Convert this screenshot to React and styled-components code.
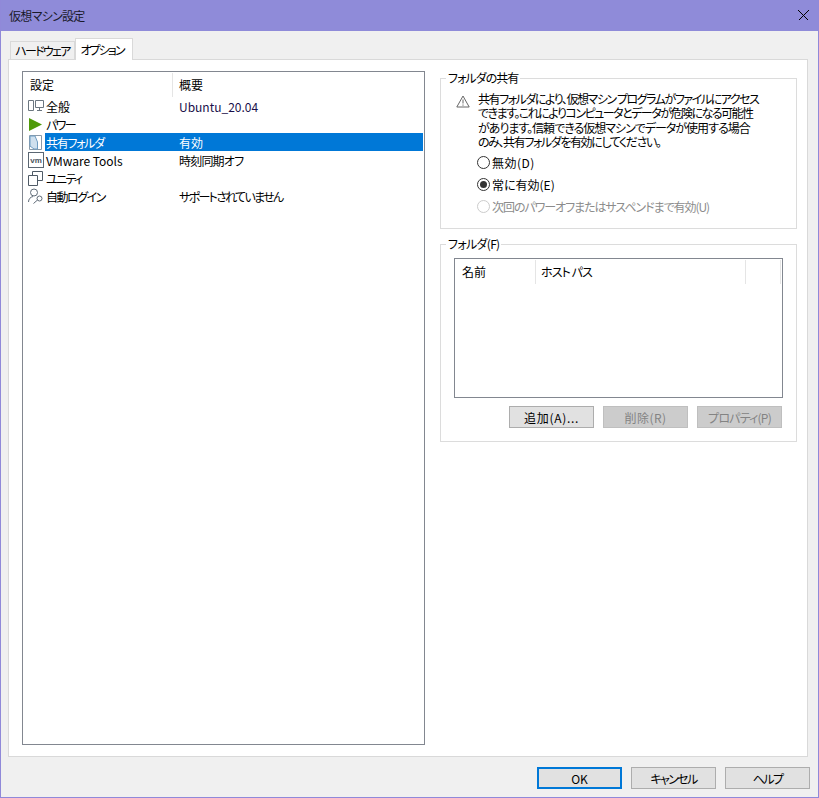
import React from 'react';
import styled, { createGlobalStyle } from 'styled-components';

const GlobalStyle = createGlobalStyle`
  html, body { margin: 0; padding: 0; background: #f0f0f0; }
  * { box-sizing: border-box; }
  body {
    font-family: "Noto Sans CJK JP", "Open Sans", sans-serif;
    font-size: 12px;
    font-feature-settings: "palt";
    color: #000;
  }
`;

const Win = styled.div`
  width: 819px;
  height: 798px;
  display: flex;
  flex-direction: column;
  border: 1px solid #9089d9;
  border-top: 0;
  background: #f0f0f0;
  overflow: hidden;
`;

const TitleBar = styled.div`
  height: 31px;
  flex: none;
  margin: 0 -1px;
  padding: 0 10px 0 9px;
  background: #8f8bd9;
  display: flex;
  align-items: center;
  justify-content: space-between;
  font-size: 12px;
  color: #1a1a2a;
`;

/* Meiryo UI kana are much narrower than Noto's, so each label gets its own tracking */
const Label = styled.span`
  letter-spacing: ${(p) => p.$track || 0}px;
  white-space: nowrap;
`;

const TabStrip = styled.div`
  height: 28px;
  flex: none;
  padding: 8px 0 0 9px;
  display: flex;
  align-items: flex-end;
`;

const Tab = styled.div`
  display: flex;
  align-items: center;
  justify-content: center;
  background: ${(p) => (p.$active ? '#fff' : '#f0f0f0')};
  border: 1px solid #d9d9d9;
  border-bottom: 0;
  width: ${(p) => (p.$active ? '58px' : '65px')};
  height: ${(p) => (p.$active ? '22px' : '18px')};
  margin-bottom: ${(p) => (p.$active ? '-1px' : '0')};
  padding-right: ${(p) => (p.$active ? '4px' : '0')};
  position: relative;
  z-index: ${(p) => (p.$active ? 1 : 0)};
`;

const Pane = styled.div`
  margin: 0 10px 0 7px;
  height: 698px;
  flex: none;
  background: #fff;
  border: 1px solid #d9d9d9;
  padding: 11px 10px 11px 13px;
  display: flex;
  gap: 15px;
`;

const ListBox = styled.div`
  width: 403px;
  flex: none;
  border: 1px solid #828790;
  background: #fff;
  padding: 1px 1px 0 1px;
`;

const ListHead = styled.div`
  display: grid;
  grid-template-columns: 149px 1fr;
  height: 24px;
  align-items: stretch;
`;

const HeadCell = styled.div`
  display: flex;
  align-items: center;
  padding: 0 0 2px 6px;
  border-right: ${(p) => (p.$divider ? '1px solid #e5e5e5' : '0')};
  height: 24px;
`;

const Row = styled.div`
  display: flex;
  height: 18px;
  align-items: center;
`;

const IconSlot = styled.div`
  width: 21px;
  height: 18px;
  padding-left: 4px;
  flex: none;
  display: flex;
  align-items: center;
`;

const RowBody = styled.div`
  flex: 1;
  height: 18px;
  display: grid;
  grid-template-columns: 133px 1fr;
  align-items: center;
  padding-left: 1px;
  background: ${(p) => (p.$selected ? '#0078d7' : 'transparent')};
  color: ${(p) => (p.$selected ? '#fff' : '#000')};
`;

const Value = styled(Label)`
  color: ${(p) => p.$color || 'inherit'};
`;

const Side = styled.div`
  width: 357px;
  flex: none;
  display: flex;
  flex-direction: column;
  gap: 8px;
`;

const Group = styled.fieldset`
  margin: 0;
  min-width: 0;
  height: ${(p) => p.$height}px;
  border: 1px solid #dcdcdc;
  padding: ${(p) => p.$padding};
`;

const Legend = styled.legend`
  margin-left: 5px;
  padding: 0 2px;
  font-size: 12px;
  line-height: 14px;
`;

const Notice = styled.div`
  display: flex;
  gap: 8px;
  padding-left: 15px;
`;

const NoticeText = styled.div`
  width: 300px;
  line-height: 14.4px;
  font-size: 12px;
`;

const NoticeLine = styled(Label)`
  display: block;
`;

const RadioList = styled.div`
  display: flex;
  flex-direction: column;
  gap: 6px;
  margin: 5px 0 0 36px;
`;

const RadioRow = styled.div`
  height: 16px;
  display: flex;
  align-items: center;
  gap: 2px;
  color: ${(p) => (p.$disabled ? '#8c8c8c' : '#000')};
`;

const Circle = styled.span`
  width: 13px;
  height: 13px;
  flex: none;
  border-radius: 50%;
  border: 1px solid ${(p) => (p.$disabled ? '#cccccc' : '#333')};
  display: flex;
  align-items: center;
  justify-content: center;
  &::after {
    content: '';
    display: ${(p) => (p.$checked ? 'block' : 'none')};
    width: 7px;
    height: 7px;
    border-radius: 50%;
    background: #333;
  }
`;

const FolderArea = styled.div`
  padding: 7px 13px 0;
`;

const FolderTable = styled.div`
  height: 140px;
  border: 1px solid #828790;
  background: #fff;
  padding: 1px 1px 0;
`;

const FolderHead = styled.div`
  display: grid;
  grid-template-columns: 80px 210px 35px;
  height: 24px;
`;

const FolderCell = styled.div`
  display: flex;
  align-items: center;
  padding: 0 0 2px ${(p) => p.$pad}px;
  border-right: 1px solid #e5e5e5;
`;

const ButtonRow = styled.div`
  display: flex;
  justify-content: flex-end;
  gap: 9px;
  margin: 8px 1px 0 0;
`;

const Button = styled.div`
  width: 85px;
  height: 22px;
  flex: none;
  display: flex;
  align-items: center;
  justify-content: center;
  background: ${(p) => (p.$disabled ? '#cccccc' : '#e1e1e1')};
  border: ${(p) => (p.$primary ? '2px solid #0078d7' : `1px solid ${p.$disabled ? '#bfbfbf' : '#adadad'}`)};
  color: ${(p) => (p.$disabled ? '#838383' : '#000')};
  font-size: 12px;
`;

const Footer = styled.div`
  flex: 1;
  display: flex;
  justify-content: flex-end;
  gap: 9px;
  padding: 10px 8px 0 0;
`;

const CloseIcon = () => (
  <svg width="11" height="11" viewBox="0 0 11 11" shapeRendering="crispEdges">
    <path d="M0.5 0.5 10.5 10.5M10.5 0.5 0.5 10.5" stroke="#000" strokeWidth="1" fill="none" />
  </svg>
);

const GeneralIcon = () => (
  <svg width="16" height="14" viewBox="0 0 16 14">
    <path d="M.5 1.5h5v10h-5zM7.5 1.5h8v7h-8zM11.5 8.5v3M9 11.5h5" fill="none" stroke="#6b7680" />
  </svg>
);

const PowerIcon = () => (
  <svg width="15" height="15" viewBox="0 0 15 15">
    <path d="M1 1 14 7.5 1 14z" fill="#4f9a0a" />
  </svg>
);

const SharedIcon = () => (
  <svg width="16" height="17" viewBox="0 0 16 17">
    <path d="M1.5 1.5h12v14h-12z" fill="#fff" stroke="#8a9aa8" />
    <path d="M2 2h5l2.5 6v7H6L2 12z" fill="#cfe0ee" stroke="#6f9dc2" />
  </svg>
);

const VmIcon = () => (
  <svg width="16" height="16" viewBox="0 0 16 16">
    <rect x=".5" y=".5" width="15" height="15" fill="#fff" stroke="#5a6672" />
    <text x="8" y="10.5" textAnchor="middle" fontSize="8" fontWeight="700" fontFamily="Liberation Sans" fill="#4a5560">vm</text>
  </svg>
);

const UnityIcon = () => (
  <svg width="15" height="16" viewBox="0 0 15 16">
    <path d="M.5 5.5h9v10h-9zM4.5 5.5v-4h10v9h-5" fill="none" stroke="#4f5a66" />
  </svg>
);

const LoginIcon = () => (
  <svg width="16" height="16" viewBox="0 0 16 16">
    <circle cx="6" cy="4.5" r="3.5" fill="none" stroke="#5f6b77" />
    <path d="M.5 14c0-3 2-5 4.5-5.5" fill="none" stroke="#5f6b77" />
    <circle cx="11.5" cy="10.5" r="2.5" fill="none" stroke="#5f6b77" />
    <path d="M9.5 12 5.5 15.5" fill="none" stroke="#5f6b77" />
  </svg>
);

const WarningIcon = () => (
  <svg width="14" height="13" viewBox="0 0 14 13" style={{ flex: 'none', marginTop: 3 }}>
    <path d="M7 1 13.2 12H.8z" fill="#fff" stroke="#666" />
    <path d="M7 4.5v4M7 9.5v1.2" stroke="#666" />
  </svg>
);

const settings = [
  { name: '全般', value: 'Ubuntu_20.04', icon: <GeneralIcon />, color: '#1a0f4a' },
  { name: 'パワー', track: -1.6, value: '', icon: <PowerIcon /> },
  { name: '共有フォルダ', track: -1.3, value: '有効', icon: <SharedIcon />, selected: true },
  { name: 'VMware Tools', value: '時刻同期オフ', valueTrack: -0.8, icon: <VmIcon /> },
  { name: 'ユニティ', track: -1.7, value: '', icon: <UnityIcon /> },
  { name: '自動ログイン', track: -1.5, value: 'サポートされていません', valueTrack: -1.7, icon: <LoginIcon /> },
];

const noticeLines = [
  { text: '共有フォルダにより、仮想マシン プログラムがファイルにアクセス', track: -1.45 },
  { text: 'できます。これによりコンピュータとデータが危険になる可能性', track: -1.5 },
  { text: 'があります。信頼できる仮想マシンでデータが使用する場合', track: -1 },
  { text: 'のみ、共有フォルダを有効にしてください。', track: -1.4 },
];

export default function App() {
  return (
    <>
      <GlobalStyle />
      <Win>
        <TitleBar>
          <Label $track={-0.7}>仮想マシン設定</Label>
          <CloseIcon />
        </TitleBar>
        <TabStrip>
          <Tab><Label $track={-1.7}>ハードウェア</Label></Tab>
          <Tab $active><Label $track={-1.9}>オプション</Label></Tab>
        </TabStrip>
        <Pane>
          <ListBox>
            <ListHead>
              <HeadCell $divider>設定</HeadCell>
              <HeadCell>概要</HeadCell>
            </ListHead>
            {settings.map((s) => (
              <Row key={s.name}>
                <IconSlot>{s.icon}</IconSlot>
                <RowBody $selected={s.selected}>
                  <Label $track={s.track}>{s.name}</Label>
                  <Value $color={s.color} $track={s.valueTrack}>{s.value}</Value>
                </RowBody>
              </Row>
            ))}
          </ListBox>
          <Side>
            <Group $height={158} $padding="7px 0 0">
              <Legend><Label $track={-1}>フォルダの共有</Label></Legend>
              <Notice>
                <WarningIcon />
                <NoticeText>
                  {noticeLines.map((l) => (
                    <NoticeLine key={l.text} $track={l.track}>{l.text}</NoticeLine>
                  ))}
                </NoticeText>
              </Notice>
              <RadioList>
                <RadioRow><Circle /><Label $track={0.5}>無効(D)</Label></RadioRow>
                <RadioRow><Circle $checked /><Label>常に有効(E)</Label></RadioRow>
                <RadioRow $disabled><Circle $disabled /><Label $track={-1.05}>次回のパワーオフまたはサスペンドまで有効(U)</Label></RadioRow>
              </RadioList>
            </Group>
            <Group $height={205} $padding="0">
              <Legend><Label $track={-0.7}>フォルダ(F)</Label></Legend>
              <FolderArea>
                <FolderTable>
                  <FolderHead>
                    <FolderCell $pad={6}>名前</FolderCell>
                    <FolderCell $pad={5}><Label $track={-0.9}>ホスト パス</Label></FolderCell>
                    <FolderCell $pad={0} />
                  </FolderHead>
                </FolderTable>
                <ButtonRow>
                  <Button><Label $track={0.7}>追加(A)...</Label></Button>
                  <Button $disabled><Label $track={0.5}>削除(R)</Label></Button>
                  <Button $disabled><Label $track={-0.8}>プロパティ(P)</Label></Button>
                </ButtonRow>
              </FolderArea>
            </Group>
          </Side>
        </Pane>
        <Footer>
          <Button $primary>OK</Button>
          <Button><Label $track={-1.6}>キャンセル</Label></Button>
          <Button><Label $track={-1.6}>ヘルプ</Label></Button>
        </Footer>
      </Win>
    </>
  );
}
